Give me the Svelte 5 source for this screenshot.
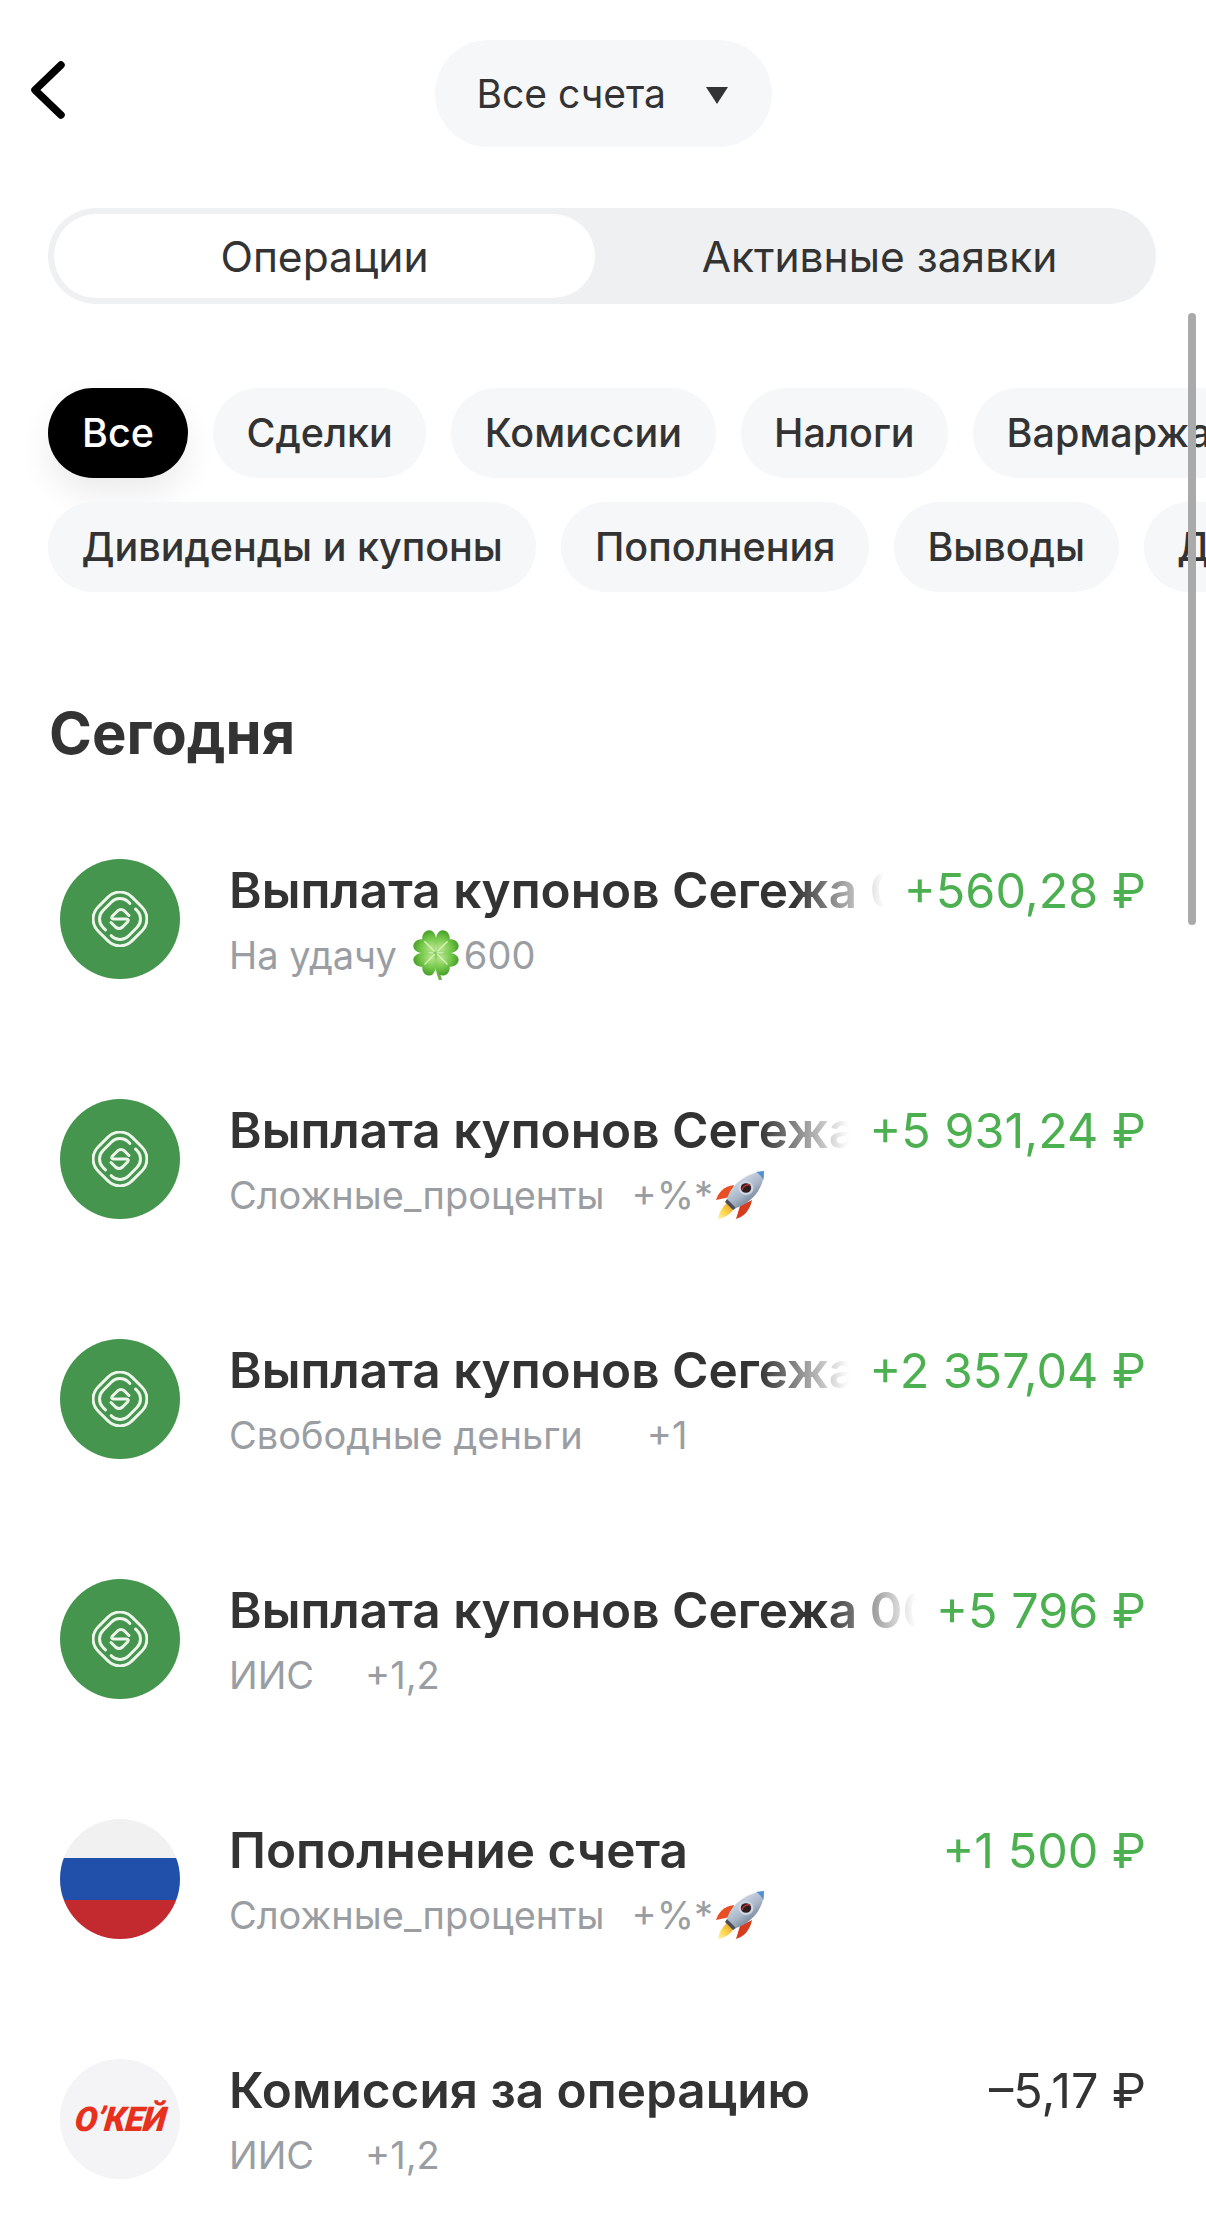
<script lang="ts">
	const rows = [
		{ icon: 'bond', title: 'Выплата купонов Сегежа 002Р', sub: 'На удачу', clover: true, tail: '600', gap: 'none', amount: '+560,28 ₽', tone: 'pos', cut: true },
		{ icon: 'bond', title: 'Выплата купонов Сегежа 002Р', sub: 'Сложные_проценты', tail: '+%*', gap: 'near', rocket: true, amount: '+5 931,24 ₽', tone: 'pos', cut: true },
		{ icon: 'bond', title: 'Выплата купонов Сегежа 002Р', sub: 'Свободные деньги', tail: '+1', gap: 'far', amount: '+2 357,04 ₽', tone: 'pos', cut: true },
		{ icon: 'bond', title: 'Выплата купонов Сегежа 002Р', sub: 'ИИС', tail: '+1,2', gap: 'mid', amount: '+5 796 ₽', tone: 'pos', cut: true },
		{ icon: 'flag', title: 'Пополнение счета', sub: 'Сложные_проценты', tail: '+%*', gap: 'near', rocket: true, amount: '+1 500 ₽', tone: 'pos' },
		{ icon: 'okey', title: 'Комиссия за операцию', sub: 'ИИС', tail: '+1,2', gap: 'mid', amount: '–5,17 ₽', tone: 'neg' }
	];
	const row1 = ['Сделки', 'Комиссии', 'Налоги', 'Вармаржа'];
	const row2 = ['Дивиденды и купоны', 'Пополнения', 'Выводы', 'Другое'];
	const leaves = [45, 135, 225, 315];
</script>

{#snippet clover()}
	<svg class="emoji clover" viewBox="0 0 48 48" aria-hidden="true">
		<defs>
			<radialGradient id="leaf" cx="50%" cy="70%" r="70%">
				<stop offset="0" stop-color="#b8e58c" />
				<stop offset="0.6" stop-color="#74c84a" />
				<stop offset="1" stop-color="#4fa52f" />
			</radialGradient>
		</defs>
		<path d="M23 22 C24 32 25 40 28 47" stroke="#6fae45" stroke-width="3" fill="none" stroke-linecap="round" />
		{#each leaves as a}
			<g transform="translate(24 22) rotate({a}) scale(0.98)">
				<path d="M0 0 C-3 -5 -13 -9 -12.5 -17 C-12 -23 -4 -24 0 -19 C4 -24 12 -23 12.5 -17 C13 -9 3 -5 0 0Z" fill="url(#leaf)" />
				<path d="M0 -2 L0 -16" stroke="#d6f3b6" stroke-width="1.4" />
			</g>
		{/each}
	</svg>
{/snippet}

{#snippet rocket()}
	<svg class="emoji rocket" viewBox="0 0 50 50" aria-hidden="true">
		<defs>
			<linearGradient id="hull" x1="0.2" y1="0.1" x2="0.8" y2="0.9">
				<stop offset="0" stop-color="#dfe6ee" />
				<stop offset="0.55" stop-color="#a9b6c8" />
				<stop offset="1" stop-color="#5f6f88" />
			</linearGradient>
			<linearGradient id="flame" x1="1" y1="0" x2="0" y2="1">
				<stop offset="0" stop-color="#f08a1e" />
				<stop offset="0.6" stop-color="#fbd44c" />
				<stop offset="1" stop-color="#fff2b0" />
			</linearGradient>
		</defs>
		<path d="M15 27 L1 30 C3 23 9 16 19 15Z" fill="#ea4f24" />
		<path d="M25 36 L21 49 C28 47 35 41 37 30Z" fill="#d63d1e" />
		<path d="M15 31 C8 35 4 42 3 49 C10 48 16 44 20 37Z" fill="url(#flame)" />
		<path d="M12 29 C15 16 30 3 49 1 C49 19 36 33 21 38Z" fill="url(#hull)" />
		<path d="M41 2 L49 1 L48.5 10 C46.5 6.5 44.5 4 41 2Z" fill="#4f8fd8" />
		<path d="M12 29 L21 38 L18 40 L10 32Z" fill="#4a4f5c" />
		<ellipse cx="31" cy="18" rx="7.5" ry="7" fill="#cdd7e3" />
		<ellipse cx="31" cy="18" rx="5.2" ry="4.8" fill="#2c1d24" />
		<path d="M27 20 C28 16 32 14 35 15" stroke="#b3352d" stroke-width="1.6" fill="none" />
	</svg>
{/snippet}

{#snippet icon(kind: string)}
	{#if kind === 'bond'}
		<span class="avatar bond">
			<svg viewBox="0 0 56 56" width="56" height="56" fill="none" stroke="#eef6ec" stroke-width="3" stroke-linecap="round" stroke-linejoin="round" aria-hidden="true">
				<rect x="4" y="4" width="48" height="48" rx="17" transform="rotate(45 28 28)" />
				<rect x="10" y="10" width="36" height="36" rx="12" stroke-dasharray="52 8" stroke-dashoffset="-10" transform="rotate(45 28 28)" />
				<path d="M37 24.5 L32.5 20 Q29 17 25.5 20 L20.5 25 Q18.5 27.5 21.5 28 L34.5 28 Q37.5 28.5 35.5 31 L30.5 36 Q27 39 23.5 36 L19 31.5" />
			</svg>
		</span>
	{:else if kind === 'flag'}
		<span class="avatar flag"><i class="w"></i><i class="b"></i><i class="r"></i></span>
	{:else}
		<span class="avatar okey"><span class="okey-word">О’КЕЙ</span></span>
	{/if}
{/snippet}

<div class="screen">
	<header class="top">
		<svg class="back" viewBox="0 0 36 60" width="36" height="60" fill="none" stroke="#000" stroke-width="7.5" stroke-linecap="round" stroke-linejoin="round" aria-label="Назад">
			<path d="M31 5 L5 30 L31 55" />
		</svg>
		<button class="account">Все счета <span class="caret"></span></button>
	</header>

	<div class="segment">
		<div class="seg on">Операции</div>
		<div class="seg off">Активные заявки</div>
	</div>

	<div class="chips">
		<div class="chip-row">
			<span class="chip active">Все</span>
			{#each row1 as c}<span class="chip">{c}</span>{/each}
		</div>
		<div class="chip-row">
			{#each row2 as c}<span class="chip">{c}</span>{/each}
		</div>
	</div>

	<h2>Сегодня</h2>

	<ul class="list">
		{#each rows as r}
			<li class="row">
				{@render icon(r.icon)}
				<div class="body">
					<div class="line">
						<span class="title" class:cut={r.cut}>{r.title}</span>
						<span class="amount {r.tone}">{r.amount}</span>
					</div>
					<div class="sub">
						<span>{r.sub}</span>
						{#if r.clover}{@render clover()}{/if}
						<span class="tail {r.gap}">{r.tail}</span>
						{#if r.rocket}{@render rocket()}{/if}
					</div>
				</div>
			</li>
		{/each}
	</ul>

	<div class="scrollbar"></div>
</div>

<style>
	:global(body) {
		background: #fff;
	}

	.screen {
		position: relative;
		width: 1206px;
		height: 2213px;
		overflow: hidden;
		background: #fff;
		font-family: Inter, 'Noto Sans', sans-serif;
		color: #333;
	}

	.top {
		display: flex;
		justify-content: center;
		padding-top: 40px;
		height: 107px;
	}

	.back {
		position: absolute;
		left: 30px;
		top: 60px;
	}

	.account {
		display: flex;
		align-items: center;
		gap: 40px;
		width: 337px;
		height: 107px;
		padding: 0 0 0 42px;
		border: 0;
		border-radius: 54px;
		background: #f6f7f8;
		color: #333;
		font: 400 39px Inter, sans-serif;
		white-space: nowrap;
	}

	.caret {
		flex: none;
		width: 0;
		height: 0;
		border-left: 11px solid transparent;
		border-right: 11px solid transparent;
		border-top: 17px solid #333;
		margin-top: 4px;
	}

	.segment {
		display: grid;
		grid-template-columns: 541px 1fr;
		width: 1108px;
		height: 96px;
		box-sizing: border-box;
		margin: 61px 0 0 48px;
		padding: 6px;
		border-radius: 48px;
		background: #eef0f2;
		font-size: 42.5px;
	}

	.seg {
		display: flex;
		align-items: center;
		justify-content: center;
		border-radius: 42px;
	}

	.seg.on {
		background: #fff;
	}

	.seg.off {
		padding-left: 14px;
	}

	.chips {
		display: flex;
		flex-direction: column;
		gap: 24px;
		margin: 84px 0 0 48px;
	}

	.chip-row {
		display: flex;
		gap: 25px;
	}

	.chip {
		display: flex;
		flex: none;
		align-items: center;
		height: 90px;
		padding: 0 33.5px;
		border-radius: 45px;
		background: #f6f7f8;
		font-size: 39.5px;
		font-weight: 500;
		white-space: nowrap;
	}

	.chip.active {
		padding: 0 34px;
		background: #000;
		color: #fff;
		box-shadow: 0 16px 32px rgba(0, 0, 0, 0.08);
	}

	h2 {
		margin: 107px 0 0 49px;
		font-size: 58px;
		line-height: 68px;
		font-weight: 700;
		color: #333;
	}

	.list {
		list-style: none;
		margin: 92px 0 0;
		padding: 0;
	}

	.row {
		display: flex;
		gap: 49px;
		height: 240px;
		padding-left: 60px;
	}

	.avatar {
		position: relative;
		display: flex;
		flex: none;
		align-items: center;
		justify-content: center;
		width: 120px;
		height: 120px;
		border-radius: 50%;
		overflow: hidden;
	}

	.bond {
		background: #45954e;
	}

	.flag {
		flex-direction: column;
		background: #f1f1f2;
	}

	.flag i {
		display: block;
		width: 100%;
	}

	.flag .w {
		height: 39px;
	}

	.flag .b {
		height: 42px;
		background: #2150ab;
	}

	.flag .r {
		height: 39px;
		background: #c32a30;
	}

	.okey {
		background: #f4f4f6;
	}

	.okey-word {
		color: #e7301d;
		font: italic 900 34px/1 Roboto, 'Liberation Sans', sans-serif;
		letter-spacing: -0.5px;
		transform: skewX(-6deg);
	}

	.body {
		flex: 1;
		min-width: 0;
		padding-right: 60px;
	}

	.line {
		display: flex;
		gap: 20px;
		height: 62px;
		align-items: center;
	}

	.title {
		flex: 1;
		min-width: 0;
		overflow: hidden;
		white-space: nowrap;
		font-size: 49.5px;
		font-weight: 600;
		color: #333;
	}

	.title.cut {
		-webkit-mask-image: linear-gradient(to right, #000 calc(100% - 90px), transparent);
		mask-image: linear-gradient(to right, #000 calc(100% - 90px), transparent);
	}

	.amount {
		flex: none;
		font-size: 48.5px;
		font-weight: 400;
	}

	.amount.pos {
		color: #4cb050;
	}

	.amount.neg {
		color: #333;
	}

	.sub {
		display: flex;
		align-items: center;
		height: 48px;
		margin-top: 10px;
		font-size: 38px;
		color: #9a9ea3;
		white-space: nowrap;
	}

	.tail.none {
		margin-left: 3px;
	}

	.tail.near {
		margin-left: 27px;
	}

	.tail.mid {
		margin-left: 51px;
	}

	.tail.far {
		margin-left: 64px;
	}

	.emoji {
		flex: none;
	}

	.emoji.clover {
		width: 50px;
		height: 50px;
		margin-left: 14px;
	}

	.emoji.rocket {
		width: 50px;
		height: 50px;
		margin-left: 2px;
	}

	.scrollbar {
		position: absolute;
		left: 1188px;
		top: 313px;
		width: 8px;
		height: 612px;
		border-radius: 4px;
		background: #aaa;
	}
</style>
